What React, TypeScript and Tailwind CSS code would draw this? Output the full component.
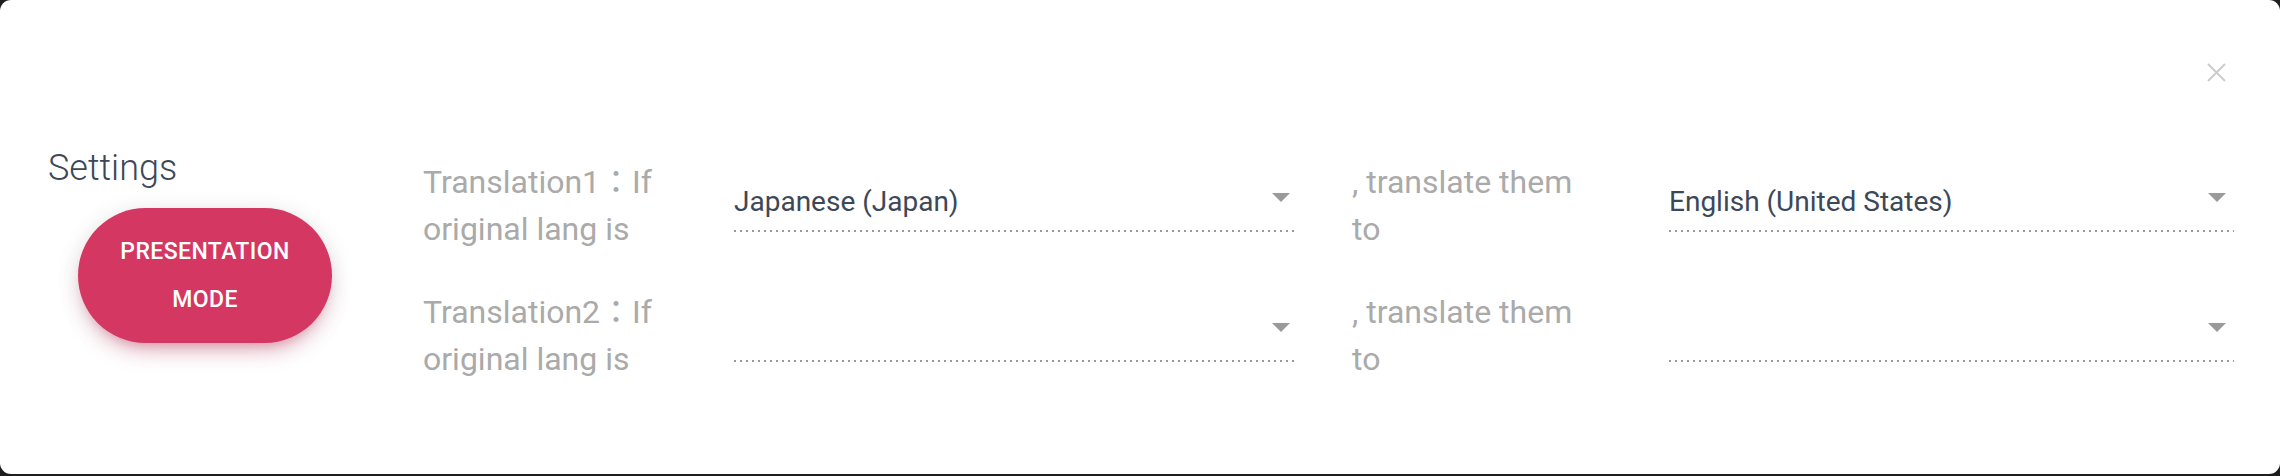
import React from 'react';

const font = { fontFamily: 'Roboto, "Noto Sans CJK JP", sans-serif' };

interface LangSelectProps {
  value?: string;
}

// Material-style select with a dotted underline and a caret
const LangSelect: React.FC<LangSelectProps> = ({ value }) => {
  return (
    <div className="relative w-full mb-[11px]">
      <div className="pt-[13px] pb-[8px] pr-10 h-[61px] text-[28px] leading-[40px] text-[#3c4858] whitespace-nowrap">
        {value}
      </div>
      <span className="absolute right-[8px] top-[24px] w-0 h-0 border-l-[9px] border-r-[9px] border-t-[9px] border-l-transparent border-r-transparent border-t-[#9a9a9a]" />
      <div className="h-[2px] w-full bg-[linear-gradient(to_right,#9a9a9a_34%,transparent_0%)] bg-[length:6px_2px] bg-repeat-x" />
    </div>
  );
};

const Label: React.FC<{ lines: string[] }> = ({ lines }) => (
  <div className="text-[32px] leading-[47px] text-[#aaaaaa]">
    {lines.map((l) => (
      <div key={l} className="whitespace-nowrap">{l}</div>
    ))}
  </div>
);

const rows = [
  { name: 'Translation1', from: 'Japanese (Japan)', to: 'English (United States)' },
  { name: 'Translation2', from: '', to: '' },
];

export default function App() {
  return (
    <div className="w-[2280px] h-[476px] bg-[#1e1e1e]" style={font}>
      <div className="relative h-[474px] bg-white rounded-[11px] flex items-start">
        {/* close */}
        <button className="absolute left-[2207px] top-[63px] w-[19px] h-[19px]">
          <svg viewBox="0 0 19 19" width="19" height="19">
            <path d="M1 1L18 18M18 1L1 18" stroke="#cccccc" strokeWidth="2" />
          </svg>
        </button>

        {/* left column */}
        <div className="w-[423px] pl-[48px] pt-[148px] shrink-0">
          <div className="w-[314px] flex flex-col items-center">
            <div className="self-start text-[36px] leading-[40px] font-light text-[#3c4858]">Settings</div>
            <button className="mt-[20px] w-[254px] h-[135px] rounded-full bg-[#d43762] text-white text-[23px] leading-[48px] font-medium tracking-[0.4px] shadow-[0_14px_26px_-12px_rgba(212,55,98,0.42),0_4px_23px_0_rgba(0,0,0,0.12),0_8px_10px_-5px_rgba(212,55,98,0.2)]">
              PRESENTATION
              <br />
              MODE
            </button>
          </div>
        </div>

        {/* translation rows */}
        <div className="pt-[141px] grid grid-cols-[311px_618px_317px_565px]">
          {rows.map((r) => (
            <React.Fragment key={r.name}>
              <div className="h-[130px] flex items-center">
                <Label lines={[`${r.name}：If`, 'original lang is']} />
              </div>
              <div className="h-[130px] flex items-center pr-[54px]">
                <LangSelect value={r.from} />
              </div>
              <div className="h-[130px] flex items-center">
                <Label lines={[', translate them', 'to']} />
              </div>
              <div className="h-[130px] flex items-center">
                <LangSelect value={r.to} />
              </div>
            </React.Fragment>
          ))}
        </div>
      </div>
    </div>
  );
}
